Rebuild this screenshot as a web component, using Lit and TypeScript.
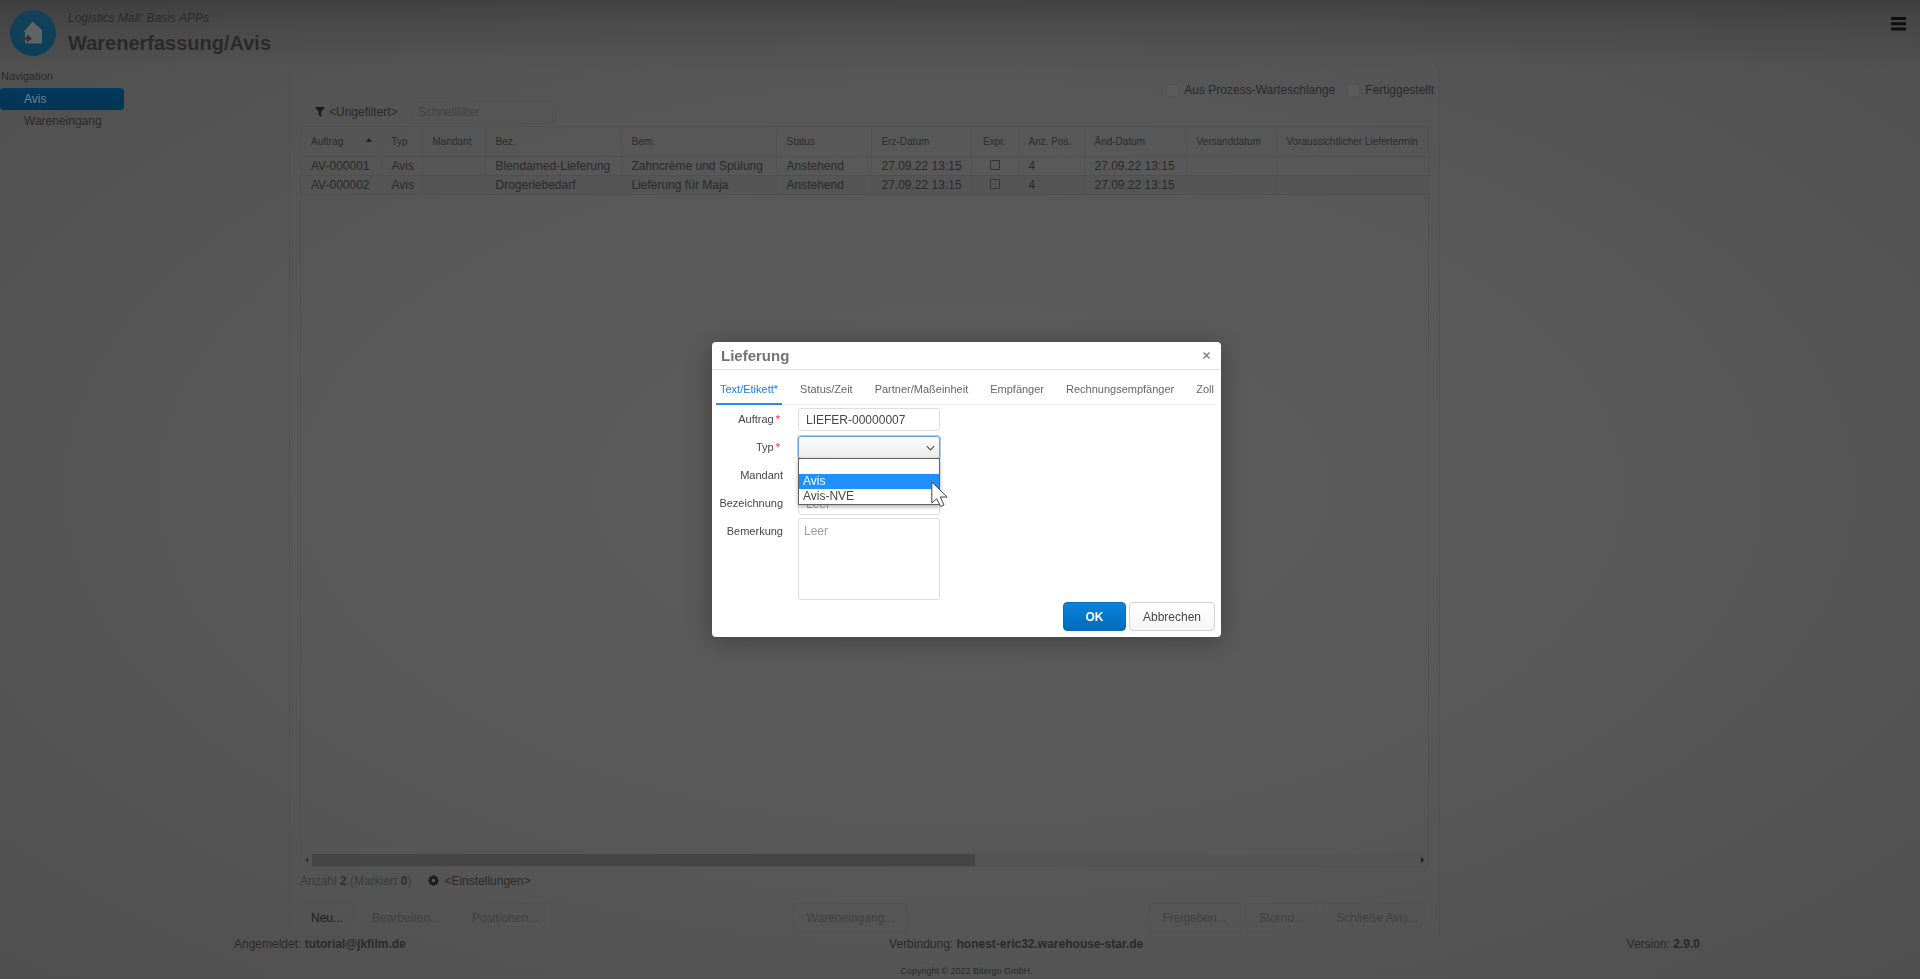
import { LitElement, html, css, svg } from "lit";
import { customElement, state } from "lit/decorators.js";

interface Order {
  id: string;
  type: string;
  name: string;
  note: string;
  status: string;
  created: string;
  positions: number;
  changed: string;
}

const ORDERS: Order[] = [
  { id: "AV-000001", type: "Avis", name: "Blendamed-Lieferung", note: "Zahncrème und Spülung", status: "Anstehend", created: "27.09.22 13:15", positions: 4, changed: "27.09.22 13:15" },
  { id: "AV-000002", type: "Avis", name: "Drogeriebedarf", note: "Lieferung für Maja", status: "Anstehend", created: "27.09.22 13:15", positions: 4, changed: "27.09.22 13:15" },
];

const TABS = ["Text/Etikett*", "Status/Zeit", "Partner/Maßeinheit", "Empfänger", "Rechnungsempfänger", "Zoll"];

const gearTeeth = [0, 45, 90, 135].map(
  (a) => svg`<rect x="4.6" y="0.4" width="2.8" height="11.2" rx="0.6" transform="rotate(${a} 6 6)"></rect>`
);

@customElement("delivery-dialog")
export class DeliveryDialog extends LitElement {
  @state() private tab = 0;

  static styles = css`
    :host {
      display: block;
      width: 509px;
      font: 12px/16px "Liberation Sans", Arial, sans-serif;
      color: #464646;
    }
    * { box-sizing: border-box; }
    button, input, select, textarea { font: inherit; color: inherit; margin: 0; }
    .dialog {
      background: #fff;
      border-radius: 4px;
      box-shadow: 0 4px 24px rgba(0, 0, 0, 0.3);
      padding-bottom: 6px;
    }
    .head {
      display: flex;
      justify-content: space-between;
      align-items: center;
      height: 28px;
      padding: 0 9px;
      border-bottom: 1px solid #dfdfdf;
    }
    .title { margin: 0; font-size: 15px; line-height: 18px; color: #737373; }
    .close { border: 0; background: none; padding: 0; width: 11px; height: 18px; display: grid; place-items: center; }
    .tabs {
      display: flex;
      justify-content: space-between;
      margin: 0 5px 0 4px;
      height: 35px;
      padding-right: 2px;
      border-bottom: 1px solid #ececec;
    }
    .tab {
      border: 0;
      background: none;
      padding: 2px 0 0;
      height: 35px;
      font-size: 11px;
      color: #666;
      white-space: nowrap;
    }
    .tab.on { color: #197de1; padding: 4px 4px 0; margin-right: -4px; border-bottom: 2px solid #2b8fe0; }
    .form { padding: 3px 0 0; display: grid; row-gap: 5px; }
    .row { display: grid; grid-template-columns: 71px 142px; column-gap: 15px; min-height: 23px; }
    .row.tall { margin-top: -2px; }
    .row.tall .label { padding-top: 2px; }
    .label { text-align: right; font-size: 11px; line-height: 23px; white-space: nowrap; }
    .req { color: #e8323c; padding: 0 3px 0 2px; }
    .field {
      width: 142px;
      height: 23px;
      border: 1px solid #dedede;
      border-radius: 3px;
      background: #fff;
      padding: 0 7px;
      outline: 0;
    }
    .area { height: 82px; padding: 4px 5px; resize: none; display: block; }
    .field::placeholder { color: #a0a0a0; opacity: 1; }
    .combo { position: relative; height: 23px; }
    .select {
      appearance: none;
      border: 1px solid #62a6dd;
      box-shadow: 0 0 0 1px #a9cdea;
      background: linear-gradient(#fcfcfc, #ececec);
      display: block;
    }
    .chevron { position: absolute; right: 5px; top: 9px; pointer-events: none; }
    .list {
      position: absolute;
      z-index: 2;
      left: 0;
      right: 0;
      top: 22px;
      margin: 0;
      padding: 0;
      list-style: none;
      background: #fff;
      border: 1px solid #606060;
      box-shadow: 0 2px 4px rgba(0, 0, 0, 0.3);
    }
    .option { height: 15px; line-height: 15px; padding: 0 4px; }
    .option.hot { background: #1e90ff; color: #fff; }
    .pointer { position: absolute; z-index: 3; left: 133px; top: 45px; }
    .actions { display: flex; justify-content: flex-end; gap: 3px; padding: 2px 6px 0 0; }
    .btn {
      height: 29px;
      border-radius: 4px;
      border: 1px solid #d2d2d2;
      background: linear-gradient(#fff, #f5f5f5);
      padding: 0 13px;
    }
    .btn.primary {
      width: 63px;
      padding: 0;
      border-color: #0a6dba;
      background: linear-gradient(#0a84d9, #006bbd);
      color: #fff;
      font-weight: bold;
    }
  `;

  render() {
    return html`
      <section class="dialog" role="dialog" aria-labelledby="title">
        <header class="head">
          <h2 class="title" id="title">Lieferung</h2>
          <button class="close" aria-label="Schließen">
            <svg width="7" height="7" viewBox="0 0 7 7" stroke="#777" stroke-width="1.3"><path d="M.5 .5L6.500 6.500M6.500 .5L.5 6.500"></path></svg>
          </button>
        </header>
        <nav class="tabs" role="tablist">
          ${TABS.map((t, i) => html`<button role="tab" class="tab ${i === this.tab ? "on" : ""}" @click=${() => (this.tab = i)}>${t}</button>`)}
        </nav>
        <form class="form" @submit=${(e: Event) => e.preventDefault()}>
          <div class="row">
            <label class="label" for="order">Auftrag<span class="req">*</span></label>
            <input class="field" id="order" .value=${"LIEFER-00000007"} />
          </div>
          <div class="row">
            <label class="label" for="type">Typ<span class="req">*</span></label>
            <div class="combo">
              <select class="field select" id="type">
                <option></option>
                <option>Avis</option>
                <option>Avis-NVE</option>
              </select>
              <svg class="chevron" width="9" height="7" viewBox="0 0 9 7" fill="none" stroke="#555" stroke-width="1.2"><path d="M.8 1.200L4.500 5L8.200 1.200"></path></svg>
              <ul class="list" role="listbox">
                <li class="option" role="option"></li>
                <li class="option hot" role="option">Avis</li>
                <li class="option" role="option">Avis-NVE</li>
              </ul>
              <svg class="pointer" width="18" height="27" viewBox="0 0 18 27" fill="#fff" stroke="#444" stroke-width="1" stroke-linejoin="round"><path d="M.8 1V22L5.600 17.800L9.600 25.500L13 24L9.200 16H16.200Z"></path></svg>
            </div>
          </div>
          <div class="row">
            <label class="label" for="client">Mandant</label>
            <input class="field" id="client" />
          </div>
          <div class="row">
            <label class="label" for="name">Bezeichnung</label>
            <input class="field" id="name" placeholder="Leer" />
          </div>
          <div class="row tall">
            <label class="label" for="note">Bemerkung</label>
            <textarea class="field area" id="note" placeholder="Leer"></textarea>
          </div>
        </form>
        <footer class="actions">
          <button class="btn primary">OK</button>
          <button class="btn">Abbrechen</button>
        </footer>
      </section>
    `;
  }
}

@customElement("app-root")
export class AppRoot extends LitElement {
  static styles = css`
    :host {
      display: block;
      font: 12px/16px "Liberation Sans", Arial, sans-serif;
      color: #2a2a2a;
    }
    * { box-sizing: border-box; }
    button, input { font: inherit; color: inherit; margin: 0; }
    .page {
      min-height: 100vh;
      display: flex;
      flex-direction: column;
      background:
        linear-gradient(rgba(0, 0, 0, 0.22), rgba(0, 0, 0, 0.12) 20px, transparent 68px),
        radial-gradient(ellipse at 50% 50%, #5c5c5c 0%, #595959 45%, #4f4f4f 100%);
    }
    .top { display: flex; align-items: flex-start; height: 68px; padding: 10px 14px 0 10px; gap: 12px; }
    .brand { flex: 1; }
    .suite { margin: 0; font-style: italic; }
    .app { margin: 0; padding-top: 5px; font-size: 20px; line-height: 24px; }
    .menu { border: 0; background: none; padding: 7px 0 0; height: 24px; display: block; }
    .main { flex: 1; display: grid; grid-template-columns: 289px minmax(0, 1fr) 25%; }
    .nav-title { margin: 0; padding: 0 1px 4px; font-size: 11px; font-weight: normal; }
    .nav-link {
      display: block;
      width: 124px;
      height: 22px;
      padding: 0 24px;
      line-height: 22px;
      color: inherit;
      text-decoration: none;
    }
    .nav-link.on {
      color: #74828c;
      background: linear-gradient(#043a5e, #023353);
      border-radius: 4px;
    }
    .panel {
      display: flex;
      flex-direction: column;
      border: 1px solid #505050;
      border-width: 0 1px;
      padding: 14px 5px 3px 10px;
      min-width: 0;
    }
    .checks { display: flex; justify-content: flex-end; gap: 12px; height: 16px; }
    .check { display: flex; align-items: center; gap: 5px; }
    .box {
      appearance: none;
      width: 13px;
      height: 13px;
      border: 1px solid #545454;
      border-radius: 3px;
      background: #5b5b5b;
    }
    .filters { display: flex; align-items: center; height: 28px; padding: 0 0 0 15px; }
    .plain { display: flex; align-items: center; gap: 4px; padding: 0; border: 0; background: none; white-space: nowrap; }
    .quick {
      width: 142px;
      height: 23px;
      margin-left: 13px;
      padding: 0 6px;
      border: 1px solid #525252;
      border-radius: 3px;
      background: transparent;
    }
    .quick::placeholder { color: #434343; opacity: 1; }
    .grid {
      flex: 1;
      display: flex;
      flex-direction: column;
      justify-content: space-between;
      margin-right: 5px;
      border: 1px solid #515151;
    }
    .data { width: 100%; table-layout: fixed; border-collapse: collapse; }
    .data th, .data td {
      padding: 0 0 0 10px;
      text-align: left;
      font-weight: normal;
      white-space: nowrap;
      border-right: 1px solid #535353;
      border-bottom: 1px solid #505050;
    }
    .data th { height: 29px; padding-top: 2px; font-size: 10px; color: #2c2c2c; }
    .data td { height: 19px; line-height: 18px; }
    .data th:last-child, .data td:last-child { border-right: 0; }
    .data tbody tr:nth-child(2) { background: #555; }
    .data td.mid { text-align: center; padding: 0; }
    .data th.mid { text-align: center; padding: 2px 0 0; }
    .sort { float: right; margin: 4px 9px 0 0; }
    .tick {
      appearance: none;
      display: inline-block;
      vertical-align: middle;
      width: 10px;
      height: 10px;
      margin-bottom: 2px;
      border: 1px solid #333;
      border-radius: 1px;
    }
    .scroll { display: flex; align-items: center; height: 12px; background: #555; gap: 4px; padding: 0 4px; }
    .rail { flex: 1; height: 12px; }
    .thumb { width: 60%; height: 12px; background: #454545; }
    .summary { display: flex; align-items: center; gap: 17px; height: 27px; color: #3c3c3c; }
    .summary b { color: #303030; }
    .summary .plain { color: #2a2a2a; gap: 5px; }
    .buttons { display: flex; justify-content: space-between; margin: 9px 2px 0 0; }
    .group { display: flex; gap: 4px; }
    .btn {
      height: 30px;
      padding: 0 10px;
      border: 1px solid #515151;
      border-radius: 4px;
      background: transparent;
      color: #1e1e1e;
      white-space: nowrap;
    }
    .btn:disabled { padding: 0 13px; color: #404040; border-color: #535353; }
    .foot { display: flex; justify-content: space-between; padding: 0 220px 0 234px; height: 16px; }
    .copy { margin: 0; padding: 11px 0 0 13px; text-align: center; font-size: 9px; }
    .modal {
      position: fixed;
      inset: 0;
      display: grid;
      place-items: center;
      padding-left: 13px;
    }
  `;

  private cols = [80, 41, 63, 136, 155, 95, 100, 47, 66, 102, 90];

  render() {
    return html`
      <div class="page">
        <header class="top">
          <svg width="46" height="46" viewBox="0 0 46 46">
            <defs><linearGradient id="disc" x1="0" y1="0" x2="0" y2="1"><stop offset="0" stop-color="#15415a"></stop><stop offset="1" stop-color="#0b3e58"></stop></linearGradient></defs>
            <circle cx="23" cy="23" r="23" fill="url(#disc)"></circle>
            <path d="M22.500 11.500L32 20V33.500H15V22H13.500Z" fill="#5f6466"></path>
            <path d="M10 28.500h9" stroke="#3f3438" stroke-width="2.4"></path>
            <path d="M17 24.500l5 4l-5 4z" fill="#372e33"></path>
          </svg>
          <div class="brand">
            <p class="suite">Logistics Mall: Basis APPs</p>
            <h1 class="app">Warenerfassung/Avis</h1>
          </div>
          <button class="menu" aria-label="Menü">
            <svg width="15" height="14" viewBox="0 0 15 14" fill="#0e0e0e"><rect width="15" height="3" rx=".6"></rect><rect y="5.300" width="15" height="3" rx=".6"></rect><rect y="10.600" width="15" height="3" rx=".6"></rect></svg>
          </button>
        </header>
        <main class="main">
          <nav>
            <h2 class="nav-title">Navigation</h2>
            <a class="nav-link on" href="#avis">Avis</a>
            <a class="nav-link" href="#wareneingang">Wareneingang</a>
          </nav>
          <section class="panel">
            <div class="checks">
              <label class="check"><input class="box" type="checkbox" />Aus Prozess-Warteschlange</label>
              <label class="check"><input class="box" type="checkbox" />Fertiggestellt</label>
            </div>
            <div class="filters">
              <button class="plain">
                <svg width="10" height="10" viewBox="0 0 10 10" fill="#1c1c1c"><path d="M0 0H10L6.300 4.800V10L3.700 8V4.800Z"></path></svg>
                &lt;Ungefiltert&gt;
              </button>
              <input class="quick" placeholder="Schnellfilter" aria-label="Schnellfilter" />
            </div>
            <div class="grid">
              <table class="data">
                <colgroup>${this.cols.map((w) => html`<col style="width:${w}px" />`)}<col /></colgroup>
                <thead>
                  <tr>
                    <th>Auftrag<svg class="sort" width="6" height="4" viewBox="0 0 7 4" fill="#1c1c1c"><path d="M3.500 0L7 4H0Z"></path></svg></th>
                    <th>Typ</th><th>Mandant</th><th>Bez.</th><th>Bem.</th><th>Status</th><th>Erz-Datum</th>
                    <th class="mid">Expr.</th><th>Anz. Pos.</th><th>Änd-Datum</th><th>Versanddatum</th><th>Voraussichtlicher Liefertermin</th>
                  </tr>
                </thead>
                <tbody>
                  ${ORDERS.map((o) => html`<tr>
                    <td>${o.id}</td><td>${o.type}</td><td></td><td>${o.name}</td><td>${o.note}</td><td>${o.status}</td><td>${o.created}</td>
                    <td class="mid"><input class="tick" type="checkbox" aria-label="Express" /></td>
                    <td>${o.positions}</td><td>${o.changed}</td><td></td><td></td>
                  </tr>`)}
                </tbody>
              </table>
              <div class="scroll">
                <svg width="3" height="6" viewBox="0 0 3 6" fill="#333"><path d="M3 0V6L0 3Z"></path></svg>
                <div class="rail"><div class="thumb"></div></div>
                <svg width="3" height="6" viewBox="0 0 3 6" fill="#1c1c1c"><path d="M0 0V6L3 3Z"></path></svg>
              </div>
            </div>
            <div class="summary">
              <span>Anzahl <b>2</b> (Markiert <b>0</b>)</span>
              <button class="plain">
                <svg width="11" height="11" viewBox="0 0 12 12" fill="#1c1c1c">${gearTeeth}<circle cx="6" cy="6" r="4.500"></circle><circle cx="6" cy="6" r="1.900" fill="#5a5a5a"></circle></svg>
                &lt;Einstellungen&gt;
              </button>
            </div>
            <div class="buttons">
              <div class="group">
                <button class="btn">Neu...</button>
                <button class="btn" disabled>Bearbeiten...</button>
                <button class="btn" disabled>Positionen...</button>
              </div>
              <button class="btn" disabled>Wareneingang...</button>
              <div class="group">
                <button class="btn" disabled>Freigeben...</button>
                <button class="btn" disabled>Storno...</button>
                <button class="btn" disabled>Schließe Avis...</button>
              </div>
            </div>
          </section>
        </main>
        <footer>
          <div class="foot">
            <span>Angemeldet: <b>tutorial@jkfilm.de</b></span>
            <span>Verbindung: <b>honest-eric32.warehouse-star.de</b></span>
            <span>Version: <b>2.9.0</b></span>
          </div>
          <p class="copy">Copyright © 2022 Bitergo GmbH.</p>
        </footer>
      </div>
      <div class="modal"><delivery-dialog></delivery-dialog></div>
    `;
  }
}
